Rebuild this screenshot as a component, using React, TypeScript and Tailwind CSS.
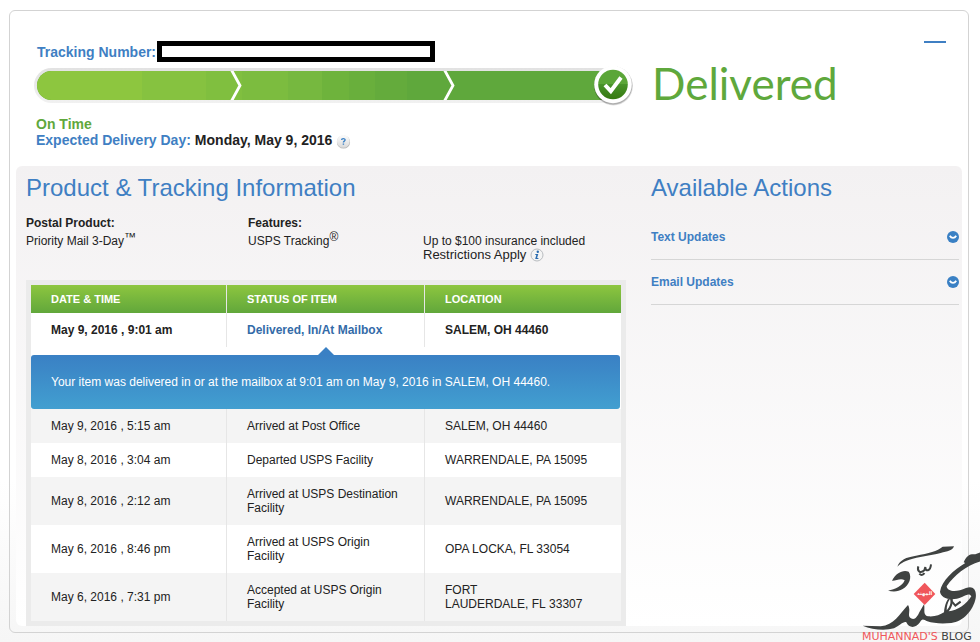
import { useState } from "react";

type Scan = { time: string; status: string; location: string };

const SCANS: Scan[] = [
  { time: "May 9, 2016 , 5:15 am", status: "Arrived at Post Office", location: "SALEM, OH 44460" },
  { time: "May 8, 2016 , 3:04 am", status: "Departed USPS Facility", location: "WARRENDALE, PA 15095" },
  { time: "May 8, 2016 , 2:12 am", status: "Arrived at USPS Destination Facility", location: "WARRENDALE, PA 15095" },
  { time: "May 6, 2016 , 8:46 pm", status: "Arrived at USPS Origin Facility", location: "OPA LOCKA, FL 33054" },
  { time: "May 6, 2016 , 7:31 pm", status: "Accepted at USPS Origin Facility", location: "FORT LAUDERDALE,\u00a0FL\u00a033307" },
];

const ACTIONS = ["Text Updates", "Email Updates"];

function Chevron() {
  return (
    <svg width="12" height="29" viewBox="0 0 12 29" fill="none" className="block">
      <path d="M1.5 -1 L10 14.5 L1.5 30" stroke="#fff" strokeWidth="2.8" />
    </svg>
  );
}

function CheckBadge() {
  return (
    <svg width="42" height="42" viewBox="0 0 42 42" className="block">
      <defs>
        <linearGradient id="badge" x1="0" y1="0" x2="0" y2="1">
          <stop offset="0.5" stopColor="#5ba638" />
          <stop offset="0.5" stopColor="#48932a" />
          <stop offset="1" stopColor="#35790f" />
        </linearGradient>
      </defs>
      <circle cx="21.5" cy="22" r="19.4" fill="#000" opacity="0.12" />
      <circle cx="21.2" cy="21.5" r="19.2" fill="#000" opacity="0.22" />
      <circle cx="21" cy="20.5" r="18.8" fill="#fff" />
      <circle cx="21" cy="20.5" r="14.8" fill="url(#badge)" />
      <path d="M13 21 L18.8 27.2 L29 13.5" fill="none" stroke="#fff" strokeWidth="4" />
    </svg>
  );
}

function ProgressBar() {
  return (
    <div className="relative h-[35px] rounded-l-full bg-linear-to-b from-[#e2e2e2] to-[#f1f1f1] py-[3px] pl-[3px]">
      <div className="flex h-full overflow-hidden rounded-l-full bg-[#5fa83c]">
        <div className="w-[105px] bg-[#8dc63f]" />
        <div className="w-16 bg-[#86c240]" />
        <div className="flex w-9 justify-end bg-[#80bf3f]">
          <Chevron />
        </div>
        <div className="w-[46px] bg-[#7cbc3f]" />
        <div className="w-[34px] bg-[#76b83f]" />
        <div className="w-[27px] bg-[#6eb33c]" />
        <div className="w-[26px] bg-[#69af3c]" />
        <div className="w-8 bg-[#64ab3c]" />
        <div className="flex w-12 justify-end">
          <Chevron />
        </div>
      </div>
      <div className="absolute -top-1 -right-[21px]">
        <CheckBadge />
      </div>
    </div>
  );
}

function HelpIcon() {
  return (
    <svg width="15" height="15" viewBox="0 0 15 15">
      <defs>
        <linearGradient id="help" x1="0" y1="0" x2="0" y2="1">
          <stop offset="0" stopColor="#fdfdfd" />
          <stop offset="1" stopColor="#d9d9d9" />
        </linearGradient>
      </defs>
      <circle cx="7.5" cy="8" r="6.6" fill="#b5b5b5" />
      <circle cx="7.3" cy="7.4" r="6.4" fill="url(#help)" />
      <path d="M5.6 6 C5.6 4.2 9.2 4.2 9.1 6 C9 7.2 7.4 7.1 7.4 8.5 M7.4 9.4 V10.8" fill="none" stroke="#3a80c6" strokeWidth="1.4" />
    </svg>
  );
}

function InfoIcon() {
  return (
    <svg width="14" height="14" viewBox="0 0 14 14">
      <circle cx="7" cy="7" r="6" fill="#f4f4f4" stroke="#b9bcc0" />
      <circle cx="7.8" cy="3.8" r="1.2" fill="#2b6cb0" />
      <path d="M5.4 6 H8.3 L7.1 10 H8.4 V11 H5.2 L6.3 7 H5.2Z" fill="#2b6cb0" />
    </svg>
  );
}

function ExpandIcon() {
  return (
    <svg width="12" height="12" viewBox="0 0 12 12">
      <circle cx="6" cy="6" r="6" fill="#3a80c4" />
      <path d="M2.8 4.8 C4.5 7.6 7.5 7.6 9.2 4.8" fill="none" stroke="#fff" strokeWidth="1.8" />
    </svg>
  );
}

function BlogMark() {
  return (
    <div className="pointer-events-none absolute right-0 bottom-0 w-[130px]">
      <svg width="130" height="97" viewBox="0 0 390 291" className="block">
        <g fill="#3f4241">
          <path d="M142 95 C150 74 168 67 198 62 C236 55 262 48 278 35 L312 34 C309 46 292 49 272 54 C240 62 205 65 178 74 C160 80 150 86 142 95Z" />
          <path d="M126 137 C138 113 160 103 176 110 C187 126 178 150 158 162 C146 170 130 171 114 167 C136 163 158 152 164 136 C152 128 138 138 126 137Z" />
          <path d="M38 272 L92 274 C132 270 148 238 174 210 C183 226 173 238 179 247 C192 260 202 246 208 232 L222 208 C226 222 217 240 234 244 C254 246 270 240 282 232 C284 212 290 190 304 183 C314 194 306 218 296 229 C322 228 350 206 364 184 C358 174 350 180 336 186 C304 200 272 190 270 170 C275 137 312 104 346 84 L341 82 C350 58 364 56 376 58 L391 52 V79 C350 90 312 121 290 154 C292 172 322 172 348 159 C368 151 381 162 377 190 C370 226 340 260 304 264 C275 267 250 265 232 259 C222 254 216 248 210 262 C196 282 176 279 169 262 C160 258 150 272 132 280 C104 288 66 284 38 272Z" />
        </g>
        <path d="M300 192 C292 202 290 216 290 226 C299 216 304 204 300 192Z" fill="#fff" />
        <path d="M306 200 L316 212 L332 200" fill="none" stroke="#3f4241" strokeWidth="6" />
        <path d="M205 94 C200 110 212 116 223 106 L226 96 C226 111 241 110 243 88 M208 116 C214 122 220 120 223 114" fill="none" stroke="#3f4241" strokeWidth="6" />
        <path d="M224 143 L256 177 L224 210 L191 177Z" fill="#f0565b" />
        <text x="224" y="181" textAnchor="middle" fill="#fff" className="font-['DejaVu_Sans',sans-serif] text-[15px] font-bold">
          المهند
        </text>
      </svg>
      <p className="pl-3 font-['DejaVu_Sans',sans-serif] text-[11px] leading-[10px] whitespace-nowrap text-[#f0565b]">
        MUHANNAD'S <span className="text-[#3f4241]">BLOG</span>
      </p>
    </div>
  );
}

export default function App() {
  const [open, setOpen] = useState(true);

  return (
    <div className="relative min-h-screen bg-linear-to-b from-white from-75% to-[#f6f6f6] pt-[10px] pr-[11px] pb-[9px] pl-[9px] font-['Liberation_Sans',Arial,sans-serif] text-xs text-[#222]">
      <main className="rounded-md border border-[#d3d3d3] p-[6px]">
        <header className="flex h-[149px] pr-4 pl-[18px]">
          <div className="flex-1 pt-6">
            <div className="flex items-center pl-[3px]">
              <label htmlFor="tracking" className="w-[120px] text-sm font-bold whitespace-nowrap text-[#3f7fc3]">
                Tracking Number:
              </label>
              <input id="tracking" readOnly className="h-[21px] w-[278px] border-[5px] border-black bg-white" />
            </div>
            <div className="mt-[6px] mr-[37px]">
              <ProgressBar />
            </div>
            <div className="mt-[13px] pl-[2px] text-sm leading-4 font-bold">
              <p className="text-[#5fa83c]">On Time</p>
              <p className="flex h-4 items-center gap-1 whitespace-nowrap">
                <span className="text-[#3f7fc3]">Expected Delivery Day:</span>
                <span>Monday, May 9, 2016</span>
                <button type="button" aria-label="Help" className="pt-[2px]">
                  <HelpIcon />
                </button>
              </p>
            </div>
          </div>
          <h1 className="w-[262px] pt-[42px] pl-[2px] font-['Lato',sans-serif] text-[44px] leading-[48px] text-[#5fa83c]">
            Delivered
          </h1>
          <div className="w-[34px] pt-[24px] text-right">
            <button
              type="button"
              aria-label="Collapse"
              onClick={() => setOpen(!open)}
              className="h-[2px] w-[22px] bg-[#3f7fc3] align-top"
            />
          </div>
        </header>

        {open && (
          <div className="flex gap-[25px] rounded-md bg-linear-to-b from-[#f3f1f2] to-white pr-[3px] pl-[10px]">
            <section className="flex-1">
              <h2 className="pt-[6px] text-2xl text-[#3f7fc3]">Product &amp; Tracking Information</h2>
              <div className="flex h-[76px] pt-[10px] leading-[18px]">
                <div className="w-[222px]">
                  <p className="font-bold">Postal Product:</p>
                  <p>
                    Priority Mail 3-Day<sup className="-top-1 text-xs">™</sup>
                  </p>
                </div>
                <div className="w-[175px]">
                  <p className="font-bold">Features:</p>
                  <p>
                    USPS Tracking<sup className="-top-1 text-xs">®</sup>
                  </p>
                </div>
                <div className="pt-[20px] leading-[14px]">
                  <p>Up to $100 insurance included</p>
                  <p className="flex items-center gap-1 text-[13px]">
                    Restrictions Apply
                    <button type="button" aria-label="Restrictions">
                      <InfoIcon />
                    </button>
                  </p>
                </div>
              </div>

              <div className="border-5 border-[#ebebeb]">
                <table className="w-full table-fixed border-separate border-spacing-0 leading-[14px]">
                  <thead>
                    <tr className="h-7 bg-linear-to-b from-[#8dc63f] to-[#61a73b] text-left text-[11px] text-white">
                      <th className="w-[196px] border-r border-[#e6e6e6] pl-5">DATE &amp; TIME</th>
                      <th className="w-[198px] border-r border-[#e6e6e6] pl-5">STATUS OF ITEM</th>
                      <th className="pl-5">LOCATION</th>
                    </tr>
                  </thead>
                  <tbody>
                    <tr className="h-[34px] bg-white font-bold">
                      <td className="border-r border-[#e6e6e6] pl-5">May 9, 2016 , 9:01 am</td>
                      <td className="border-r border-[#e6e6e6] pl-5">
                        <a href="#status" className="text-[#336ba8]">
                          Delivered, In/At Mailbox
                        </a>
                      </td>
                      <td className="pl-5">SALEM, OH 44460</td>
                    </tr>
                    <tr className="bg-white">
                      <td colSpan={3} className="pr-px">
                        <svg width="16" height="8" viewBox="0 0 16 8" className="mx-auto block">
                          <path d="M8 0 L16 8 H0Z" fill="#3a80c4" />
                        </svg>
                        <p
                          id="status"
                          className="rounded-[3px] bg-linear-to-b from-[#3a80c4] to-[#429fd0] px-5 py-5 text-white"
                        >
                          Your item was delivered in or at the mailbox at 9:01 am on May 9, 2016 in SALEM, OH 44460.
                        </p>
                      </td>
                    </tr>
                    {SCANS.map((s) => (
                      <tr key={s.time} className="odd:bg-[#f4f4f4] even:bg-white">
                        <td className="border-r border-[#e6e6e6] py-[10px] pl-5">{s.time}</td>
                        <td className="border-r border-[#e6e6e6] px-5 py-[10px]">{s.status}</td>
                        <td className="px-5 py-[10px]">{s.location}</td>
                      </tr>
                    ))}
                  </tbody>
                </table>
              </div>
            </section>

            <aside className="w-[308px]">
              <h2 className="pt-[6px] pb-[11px] text-2xl text-[#3f7fc3]">Available Actions</h2>
              {ACTIONS.map((a) => (
                <button
                  key={a}
                  type="button"
                  className="flex h-[45px] w-full items-center justify-between border-b border-[#d6d6d6] font-bold text-[#3f7fc3]"
                >
                  {a}
                  <ExpandIcon />
                </button>
              ))}
            </aside>
          </div>
        )}
      </main>
      <BlogMark />
    </div>
  );
}
